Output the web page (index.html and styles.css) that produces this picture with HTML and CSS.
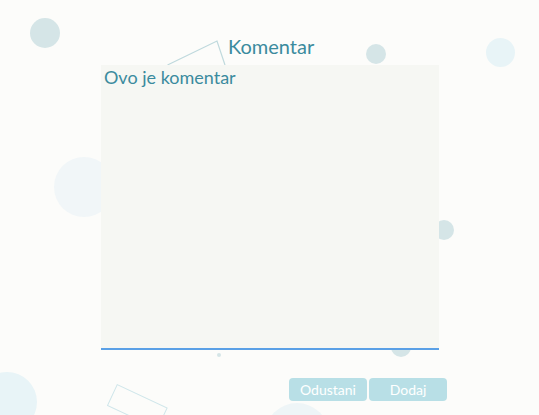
FILE: index.html
```html
<!DOCTYPE html>
<html lang="hr">
<head>
<meta charset="utf-8">
<title>Komentar</title>
<link rel="stylesheet" href="styles.css">
</head>
<body>
<div class="deco" aria-hidden="true">
  <span class="dot c1"></span>
  <span class="dot c2"></span>
  <span class="dot c3"></span>
  <span class="dot c4"></span>
  <span class="dot c5"></span>
  <span class="dot c6"></span>
  <span class="dot c7"></span>
  <span class="dot c8"></span>
  <span class="dot c9"></span>
  <span class="frame"></span>
  <svg class="pointer" width="539" height="100" viewBox="0 0 539 100">
    <polyline points="167.5,65 217,41 225,65" fill="none" stroke="#bfd9dd" stroke-width="1.2"/>
  </svg>
</div>
<main class="dialog">
  <h1 class="title">Komentar</h1>
  <textarea class="comment">Ovo je komentar</textarea>
  <div class="actions">
    <button class="btn">Odustani</button>
    <button class="btn">Dodaj</button>
  </div>
</main>
</body>
</html>
```

FILE: styles.css
```css
* { box-sizing: border-box; }
html, body {
  margin: 0;
  padding: 0;
  width: 539px;
  height: 415px;
  overflow: hidden;
  background: #fcfcfa;
  font-family: Lato, "Open Sans", sans-serif;
}
.deco {
  position: absolute;
  left: 0;
  top: 0;
  width: 539px;
  height: 415px;
  overflow: hidden;
}
.dot {
  position: absolute;
  border-radius: 50%;
  background: #d5e5e7;
}
.c1 { left: 30px; top: 18px; width: 30px; height: 30px; }
.c2 { left: 366px; top: 44px; width: 20px; height: 20px; }
.c3 { left: 486px; top: 38px; width: 29px; height: 29px; background: #e8f4f7; }
.c4 { left: 54px; top: 157px; width: 60px; height: 60px; background: #f1f6f8; }
.c5 { left: 434px; top: 220px; width: 20px; height: 20px; }
.c6 { left: 391px; top: 337px; width: 20px; height: 20px; }
.c7 { left: 217px; top: 353px; width: 4px; height: 4px; }
.c8 { left: -23px; top: 372px; width: 60px; height: 60px; background: #e8f4f7; }
.c9 { left: 265px; top: 403px; width: 64px; height: 64px; background: #eef5f7; }
.frame {
  position: absolute;
  left: 117px;
  top: 384px;
  width: 56px;
  height: 24px;
  border: 1px solid #cfe6ea;
  transform-origin: 0 0;
  transform: rotate(25deg);
}
.pointer {
  position: absolute;
  left: 0;
  top: 0;
}
.dialog {
  position: relative;
  display: flex;
  flex-direction: column;
  padding: 34px 0 0 101px;
  width: 447px;
}
.title {
  margin: 0 0 0 127px;
  height: 31px;
  font-size: 20px;
  font-weight: 400;
  line-height: 24px;
  color: #3b8b9e;
}
.comment {
  display: block;
  width: 338px;
  height: 285px;
  margin: 0;
  padding: 0 3px;
  border: 0;
  border-bottom: 2px solid #5aa0e6;
  background: #f6f7f3;
  color: #3b8b9e;
  font-family: Lato, "Open Sans", sans-serif;
  font-size: 18px;
  line-height: 24px;
  resize: none;
  outline: none;
}
.actions {
  display: flex;
  justify-content: flex-end;
  gap: 2px;
  margin-top: 28px;
}
.btn {
  width: 78px;
  height: 23px;
  border: 0;
  border-radius: 4px;
  background: #b8dfe6;
  color: #ffffff;
  font-family: Lato, "Open Sans", sans-serif;
  font-size: 14px;
  line-height: 23px;
  padding: 0;
}
```
